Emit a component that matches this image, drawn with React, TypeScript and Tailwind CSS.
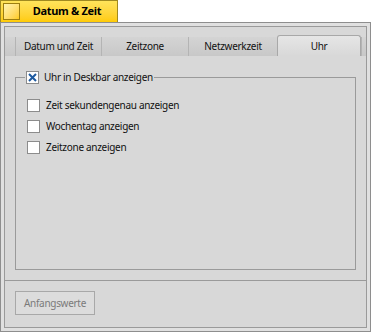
import React from 'react'

const font = { fontFamily: '"Noto Sans", "DejaVu Sans", sans-serif', letterSpacing: '-0.3px' }

function Check({ checked }: { checked?: boolean }) {
    return (
        <div className="w-[13px] h-[13px] border border-[#8c8c8c] bg-white flex items-center justify-center shrink-0">
            {checked && (
                <svg width="9" height="9" viewBox="0 0 9 9">
                    <path d="M1 1 L8 8 M8 1 L1 8" stroke="#1e5aa0" strokeWidth="2" />
                </svg>
            )}
        </div>
    )
}

function Tab({ label, w }: { label: string; w: string }) {
    return (
        <div className={`${w} h-[19px] mt-[2px] border-l border-[#b4b4b4] bg-gradient-to-b from-[#d4d4d4] to-[#c8c8c8] flex items-center justify-center text-[10px] text-[#111] whitespace-nowrap`}>
            {label}
        </div>
    )
}

export default function App() {
    return (
        <div className="w-[371px] h-[332px] bg-white relative" style={font}>
            {/* title tab */}
            <div className="w-[118px] h-[22px] border border-b-0 border-[#a08a20] bg-gradient-to-b from-[#ffe45a] to-[#ffcb00] flex items-center">
                <div className="ml-[2px] w-[17px] h-[17px] border border-[#9c7e10] bg-gradient-to-br from-[#fff4b0] to-[#ffcc10]" />
                <div className="flex-1 text-center text-[11px] font-bold text-black pr-[3px]">Datum &amp; Zeit</div>
            </div>
            {/* window frame */}
            <div className="h-[310px] border border-[#8e8e8e] bg-[#e0e0e0] p-[3px]">
                <div className="h-full border border-[#9a9a9a] bg-[#d8d8d8] flex flex-col">
                    <div className="h-[254px] flex flex-col border-b border-[#9a9a9a]">
                        <div className="pt-[8px] flex items-start">
                            <div className="w-[10px] h-[19px] mt-[2px] bg-gradient-to-b from-[#d4d4d4] to-[#c8c8c8]" />
                            <Tab label="Datum und Zeit" w="w-[86px]" />
                            <Tab label="Zeitzone" w="w-[87px]" />
                            <Tab label="Netzwerkzeit" w="w-[89px]" />
                            <div className="w-[84px] h-[21px] border border-b-0 border-[#a8a8a8] rounded-t-[3px] bg-gradient-to-b from-[#e6e6e6] to-[#d8d8d8] flex items-center justify-center text-[10px] text-[#111]">
                                Uhr
                            </div>
                            <div className="flex-1 h-[19px] mt-[2px] border-l border-[#b4b4b4] bg-gradient-to-b from-[#d4d4d4] to-[#c8c8c8]" />
                        </div>
                        <div className="flex-1 px-[10px] pt-[21px] pb-[10px]">
                            <div className="relative h-full border border-[#9a9a9a] pt-[21px] pl-[11px]">
                                <div className="absolute left-[9px] top-[-8px] bg-[#d8d8d8] flex items-center gap-[5px] px-[1px]">
                                    <Check checked />
                                    <span className="text-[10px] text-[#111] leading-[15px]">Uhr in Deskbar anzeigen</span>
                                </div>
                                <div className="flex flex-col gap-[8px]">
                                    <div className="flex items-center gap-[6px]">
                                        <Check />
                                        <span className="text-[10px] text-[#111] leading-[13px]">Zeit sekundengenau anzeigen</span>
                                    </div>
                                    <div className="flex items-center gap-[6px]">
                                        <Check />
                                        <span className="text-[10px] text-[#111] leading-[13px]">Wochentag anzeigen</span>
                                    </div>
                                    <div className="flex items-center gap-[6px]">
                                        <Check />
                                        <span className="text-[10px] text-[#111] leading-[13px]">Zeitzone anzeigen</span>
                                    </div>
                                </div>
                            </div>
                        </div>
                    </div>
                    <div className="px-[10px] pt-[10px]">
                        <div className="w-[80px] h-[24px] border border-[#a8a8a8] bg-[#dcdcdc] flex items-center justify-center text-[10px] text-[#7a7a7a]">
                            Anfangswerte
                        </div>
                    </div>
                </div>
            </div>
        </div>
    )
}
